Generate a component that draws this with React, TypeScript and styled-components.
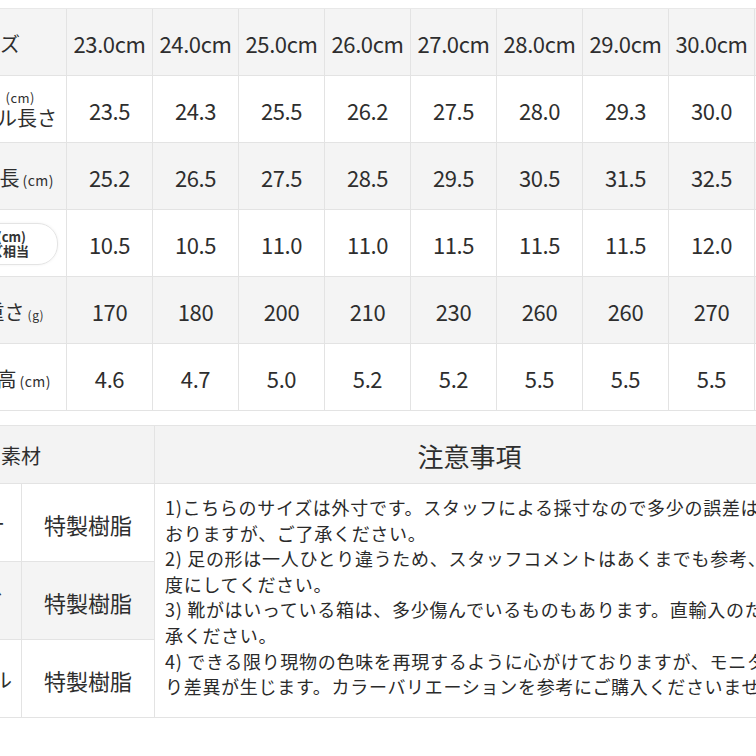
import React from 'react';
import styled, { createGlobalStyle } from 'styled-components';

const GlobalStyle = createGlobalStyle`
  html, body {
    margin: 0;
    padding: 0;
    background: #ffffff;
    overflow: hidden;
  }
  body {
    font-family: "Noto Sans CJK JP", "Noto Sans", sans-serif;
    color: #2e2e2e;
  }
`;

const Page = styled.div`
  width: 756px;
  height: 756px;
  overflow: hidden;
  padding-top: 8px;
  box-sizing: border-box;
  display: flex;
  flex-direction: column;
  gap: 14px;
`;

// サイズ表
const SizeGrid = styled.div`
  display: grid;
  grid-template-columns: 67px repeat(8, 86px) 40px;
  grid-auto-rows: 67px;
  border-top: 1px solid #e8e8e8;
  flex-shrink: 0;
`;

const Cell = styled.div<{ $shade?: boolean }>`
  box-sizing: border-box;
  border-right: 1px solid #e3e3e3;
  border-bottom: 1px solid #e3e3e3;
  background: ${(p) => (p.$shade ? '#f4f4f4' : '#ffffff')};
  display: flex;
  align-items: center;
  justify-content: center;
  padding-top: 2px;
  font-size: 22px;
  letter-spacing: -0.4px;
  white-space: nowrap;
  overflow: hidden;
`;

const LabelCell = styled(Cell)<{ $pr: number }>`
  justify-content: flex-end;
  padding-right: ${(p) => p.$pr}px;
  font-size: 20px;
  letter-spacing: 0;
`;

const Small = styled.span<{ $size?: number }>`
  font-size: ${(p) => p.$size ?? 14}px;
  margin-left: 3px;
  letter-spacing: 0.5px;
`;

const Stack = styled.div`
  display: flex;
  flex-direction: column;
  align-items: flex-end;
  line-height: 1.15;
`;

const SupLine = styled.span<{ $mr: number }>`
  font-size: 13px;
  margin-right: ${(p) => p.$mr}px;
  letter-spacing: 0.5px;
`;

const Pill = styled.div`
  display: flex;
  flex-direction: column;
  align-items: flex-end;
  height: 40px;
  justify-content: center;
  padding: 0 28px 0 14px;
  border: 1.5px solid #e4e4e4;
  border-radius: 20px;
  box-shadow: 0 0 3px rgba(0, 0, 0, 0.06);
  font-size: 13px;
  font-weight: 700;
  line-height: 1.05;
  color: #333;
`;

const PillLine = styled.span<{ $mr?: number }>`
  margin-right: ${(p) => p.$mr ?? 0}px;
`;

// 素材・注意事項
const NoteGrid = styled.div`
  display: grid;
  grid-template-columns: 22px 133px 630px;
  grid-template-rows: 58px 78px 78px 78px;
  border-top: 1px solid #e4e4e4;
  flex-shrink: 0;
`;

const HeadCell = styled(Cell)<{ $span?: number; $pr?: number }>`
  grid-column: span ${(p) => p.$span ?? 1};
  background: #f3f3f3;
  font-size: ${(p) => (p.$pr !== undefined ? 20 : 26)}px;
  letter-spacing: 0;
  justify-content: ${(p) => (p.$pr !== undefined ? 'flex-end' : 'center')};
  padding-right: ${(p) => p.$pr ?? 0}px;
`;

const MatCell = styled(Cell)<{ $row: number }>`
  grid-column: 2;
  grid-row: ${(p) => p.$row};
  font-size: 22px;
  letter-spacing: 0;
`;

const PartCell = styled(LabelCell)<{ $row: number }>`
  grid-column: 1;
  grid-row: ${(p) => p.$row};
  font-size: 20px;
`;

const Notes = styled.div`
  grid-column: 3;
  grid-row: 2 / span 3;
  box-sizing: border-box;
  border-bottom: 1px solid #e3e3e3;
  background: #ffffff;
  padding: 11px 0 0 10px;
  overflow: hidden;
  font-size: 18px;
  line-height: 25.6px;
  letter-spacing: 0.7px;
  color: #2a2a2a;
`;

const NoteLine = styled.div`
  white-space: nowrap;
`;

const sizes = ['23.0', '24.0', '25.0', '26.0', '27.0', '28.0', '29.0', '30.0'];

const rows: { values: string[] }[] = [
  { values: ['23.5', '24.3', '25.5', '26.2', '27.5', '28.0', '29.3', '30.0'] },
  { values: ['25.2', '26.5', '27.5', '28.5', '29.5', '30.5', '31.5', '32.5'] },
  { values: ['10.5', '10.5', '11.0', '11.0', '11.5', '11.5', '11.5', '12.0'] },
  { values: ['170', '180', '200', '210', '230', '260', '260', '270'] },
  { values: ['4.6', '4.7', '5.0', '5.2', '5.2', '5.5', '5.5', '5.5'] },
];

const labels = [
  { pr: 9, node: (
    <Stack>
      <SupLine $mr={22}>(cm)</SupLine>
      <span>インソール長さ</span>
    </Stack>
  ) },
  { pr: 12, node: (<span>アウトソール全長<Small $size={14}>(cm)</Small></span>) },
  { pr: 8, node: (
    <Pill>
      <PillLine $mr={3}>足幅(cm)</PillLine>
      <PillLine>ワイズ相当</PillLine>
    </Pill>
  ) },
  { pr: 22, node: (<span>重さ<Small $size={12}>(g)</Small></span>) },
  { pr: 15, node: (<span>ヒール高<Small $size={14}>(cm)</Small></span>) },
];

const materials = [
  { part: 'アッパー', pr: 16 },
  { part: 'ライニング', pr: 19 },
  { part: 'ソール', pr: 9 },
];

const notes = [
  '1)こちらのサイズは外寸です。スタッフによる採寸なので多少の誤差はございます。',
  'おりますが、ご了承ください。',
  '2) 足の形は一人ひとり違うため、スタッフコメントはあくまでも参考、目安程',
  '度にしてください。',
  '3) 靴がはいっている箱は、多少傷んでいるものもあります。直輸入のため、ご了',
  '承ください。',
  '4) できる限り現物の色味を再現するように心がけておりますが、モニターによ',
  'り差異が生じます。カラーバリエーションを参考にご購入くださいませ。',
];

export default function App() {
  return (
    <>
      <GlobalStyle />
      <Page>
        <SizeGrid>
          <LabelCell $shade $pr={46}>サイズ</LabelCell>
          {sizes.map((s) => (
            <Cell key={s} $shade>{s}cm</Cell>
          ))}
          <Cell $shade />
          {rows.map((row, i) => (
            <React.Fragment key={i}>
              <LabelCell $shade={i % 2 === 1} $pr={labels[i].pr}>{labels[i].node}</LabelCell>
              {row.values.map((v, j) => (
                <Cell key={j} $shade={i % 2 === 1}>{v}</Cell>
              ))}
              <Cell $shade={i % 2 === 1} />
            </React.Fragment>
          ))}
        </SizeGrid>

        <NoteGrid>
          <HeadCell $span={2} $pr={113}>使用素材</HeadCell>
          <HeadCell>注意事項</HeadCell>
          {materials.map((m, i) => (
            <React.Fragment key={m.part}>
              <PartCell $shade={i === 1} $pr={m.pr} $row={i + 2}>{m.part}</PartCell>
              <MatCell $shade={i === 1} $row={i + 2}>特製樹脂</MatCell>
            </React.Fragment>
          ))}
          <Notes>
            {notes.map((n) => (
              <NoteLine key={n}>{n}</NoteLine>
            ))}
          </Notes>
        </NoteGrid>
      </Page>
    </>
  );
}
